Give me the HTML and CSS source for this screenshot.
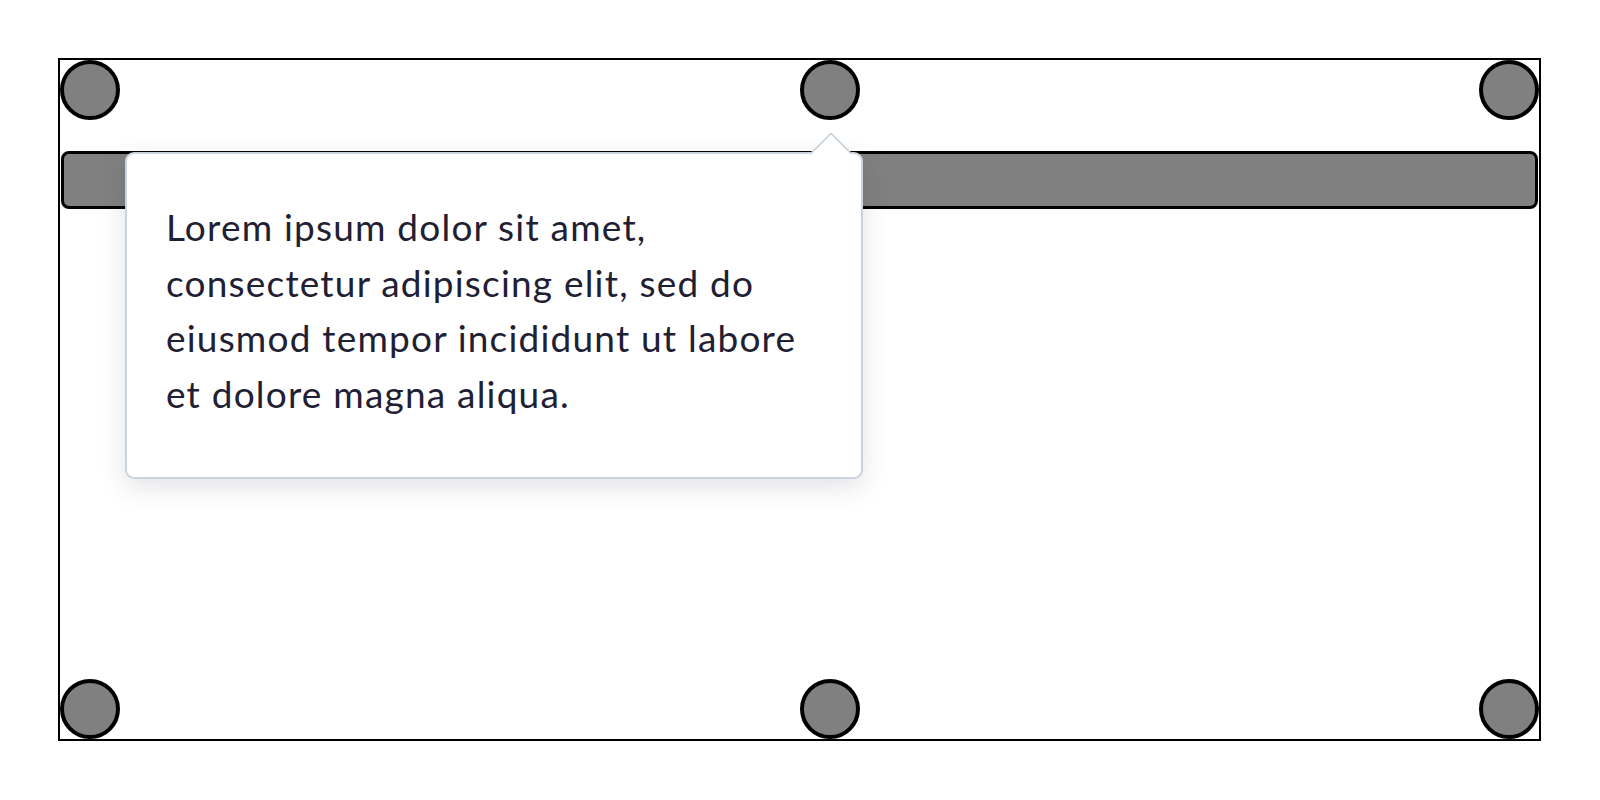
FILE: index.html
```html
<!DOCTYPE html>
<html lang="en">
<head>
<meta charset="utf-8">
<title>Tooltip</title>
<link rel="stylesheet" href="styles.css">
</head>
<body>
<div class="page">
  <div class="frame">
    <div class="handle-row">
      <div class="half"><span class="handle"></span></div>
      <div class="half split"><span class="handle"></span><span class="handle"></span></div>
    </div>
    <div class="bar"></div>
    <div class="spacer"></div>
    <div class="handle-row">
      <div class="half"><span class="handle"></span></div>
      <div class="half split"><span class="handle"></span><span class="handle"></span></div>
    </div>
    <div class="tooltip">
      <span class="arrow"></span>
      <p class="tip-text">Lorem ipsum dolor sit amet, consectetur adipiscing elit, sed do eiusmod tempor incididunt ut labore et dolore magna aliqua.</p>
    </div>
  </div>
</div>
</body>
</html>
```

FILE: styles.css
```css
html, body {
  margin: 0;
  padding: 0;
  background: #ffffff;
}
.page {
  padding: 58px 0 0 58px;
}
.frame {
  position: relative;
  box-sizing: border-box;
  width: 1483px;
  height: 683px;
  border: 2px solid #000000;
  display: flex;
  flex-direction: column;
}
.handle-row {
  display: flex;
  height: 60px;
}
.half {
  flex: 1;
  display: flex;
}
.split {
  justify-content: space-between;
}
.handle {
  box-sizing: border-box;
  width: 60px;
  height: 60px;
  border-radius: 50%;
  background: #808080;
  border: 4.5px solid #000000;
}
.bar {
  box-sizing: border-box;
  margin: 31px 1px 0 1px;
  height: 58px;
  background: #808080;
  border: 3.5px solid #000000;
  border-radius: 8px;
}
.spacer {
  flex: 1;
}
.tooltip {
  position: absolute;
  left: 65px;
  top: 92px;
  box-sizing: border-box;
  width: 738px;
  height: 327px;
  background: #ffffff;
  border: 2px solid #cad4de;
  border-radius: 9px;
  box-shadow: 0 8px 26px rgba(30, 40, 60, 0.13);
  padding: 45px 38px 0 39px;
}
.arrow {
  position: absolute;
  top: -16px;
  right: 15px;
  width: 28px;
  height: 28px;
  background: #ffffff;
  border-top: 2px solid #cad4de;
  border-left: 2px solid #cad4de;
  border-top-left-radius: 3px;
  transform: rotate(45deg);
}
.tip-text {
  position: relative;
  margin: 0;
  font-family: Lato, "Open Sans", sans-serif;
  font-size: 37px;
  line-height: 55.5px;
  letter-spacing: 1.2px;
  color: #1f2033;
}
```
